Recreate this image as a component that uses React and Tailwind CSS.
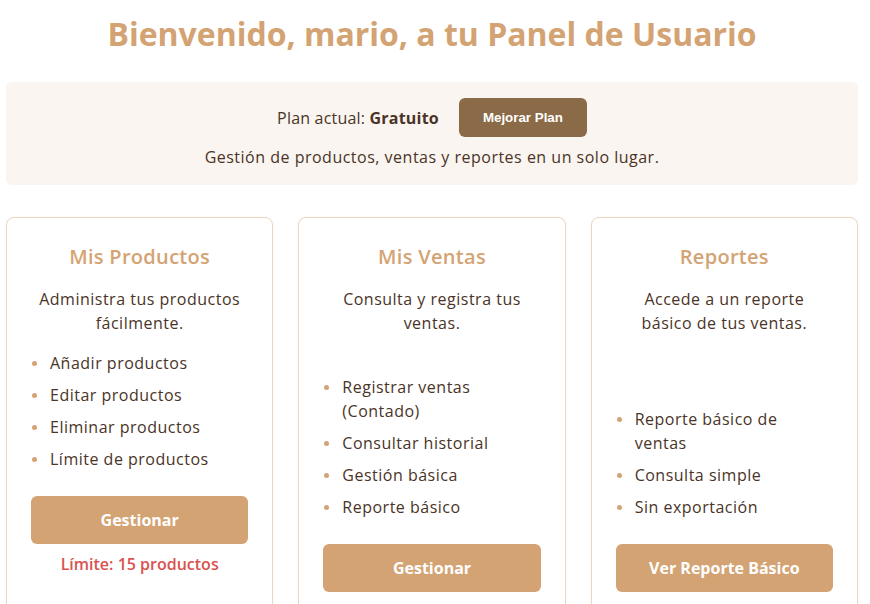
const cards = [
  {
    title: 'Mis Productos',
    desc: 'Administra tus productos fácilmente.',
    items: ['Añadir productos', 'Editar productos', 'Eliminar productos', 'Límite de productos'],
    button: 'Gestionar',
    note: 'Límite: 15 productos',
  },
  {
    title: 'Mis Ventas',
    desc: 'Consulta y registra tus ventas.',
    items: ['Registrar ventas (Contado)', 'Consultar historial', 'Gestión básica', 'Reporte básico'],
    button: 'Gestionar',
  },
  {
    title: 'Reportes',
    desc: 'Accede a un reporte básico de tus ventas.',
    items: ['Reporte básico de ventas', 'Consulta simple', 'Sin exportación'],
    button: 'Ver Reporte Básico',
  },
];

function Card({ card }) {
  return (
    <div className="flex flex-col rounded-lg border border-[#ecd6bd] bg-white p-6 text-center shadow-[0_1px_4px_rgba(0,0,0,0.04)]">
      <h2 className="mb-[15px] text-xl font-semibold leading-[30px] tracking-[0.3px] text-[#d4a373]">{card.title}</h2>
      <p className="mb-4 px-2 leading-6 tracking-[0.5px]">{card.desc}</p>
      <ul className="mt-auto flex flex-col gap-2 text-left">
        {card.items.map((item) => (
          <li key={item} className="flex leading-6 tracking-[0.5px]">
            <span className="flex w-[19px] shrink-0 pl-[1px] pt-[10px]">
              <span className="h-[5px] w-[5px] rounded-full bg-[#d4a373]" />
            </span>
            <span>{item}</span>
          </li>
        ))}
      </ul>
      <button className="mt-[25px] h-12 w-full rounded-md bg-[#d4a373] font-bold leading-[46px] text-white">
        {card.button}
      </button>
      {card.note && (
        <p className="mt-2 mb-4 font-semibold leading-6 text-[#d9534f]">{card.note}</p>
      )}
    </div>
  );
}

export default function App() {
  return (
    <div className="min-h-screen bg-white pt-[14px] font-['Open_Sans',sans-serif] text-[#4a3427]">
      <div className="ml-[6px] w-[852px]">
        <h1 className="text-center text-[32px] font-bold leading-[40px] text-[#d4a373]">
          Bienvenido, mario, a tu Panel de Usuario
        </h1>

        <div className="mt-7 rounded-md bg-[#faf5f0] p-4 text-center">
          <div className="flex items-center justify-center">
            <span className="tracking-[0.2px]">
              Plan actual: <strong className="font-bold">Gratuito</strong>
            </span>
            <button className="ml-5 h-[39px] w-[128px] rounded-md bg-[#8b6b47] font-['Liberation_Sans',Arial,sans-serif] text-[13.33px] font-bold text-white">
              Mejorar Plan
            </button>
          </div>
          <p className="mt-2 leading-6 tracking-[0.5px]">
            Gestión de productos, ventas y reportes en un solo lugar.
          </p>
        </div>

        <div className="mt-8 grid grid-cols-3 gap-[25px]">
          {cards.map((card) => (
            <Card key={card.title} card={card} />
          ))}
        </div>
      </div>
    </div>
  );
}
